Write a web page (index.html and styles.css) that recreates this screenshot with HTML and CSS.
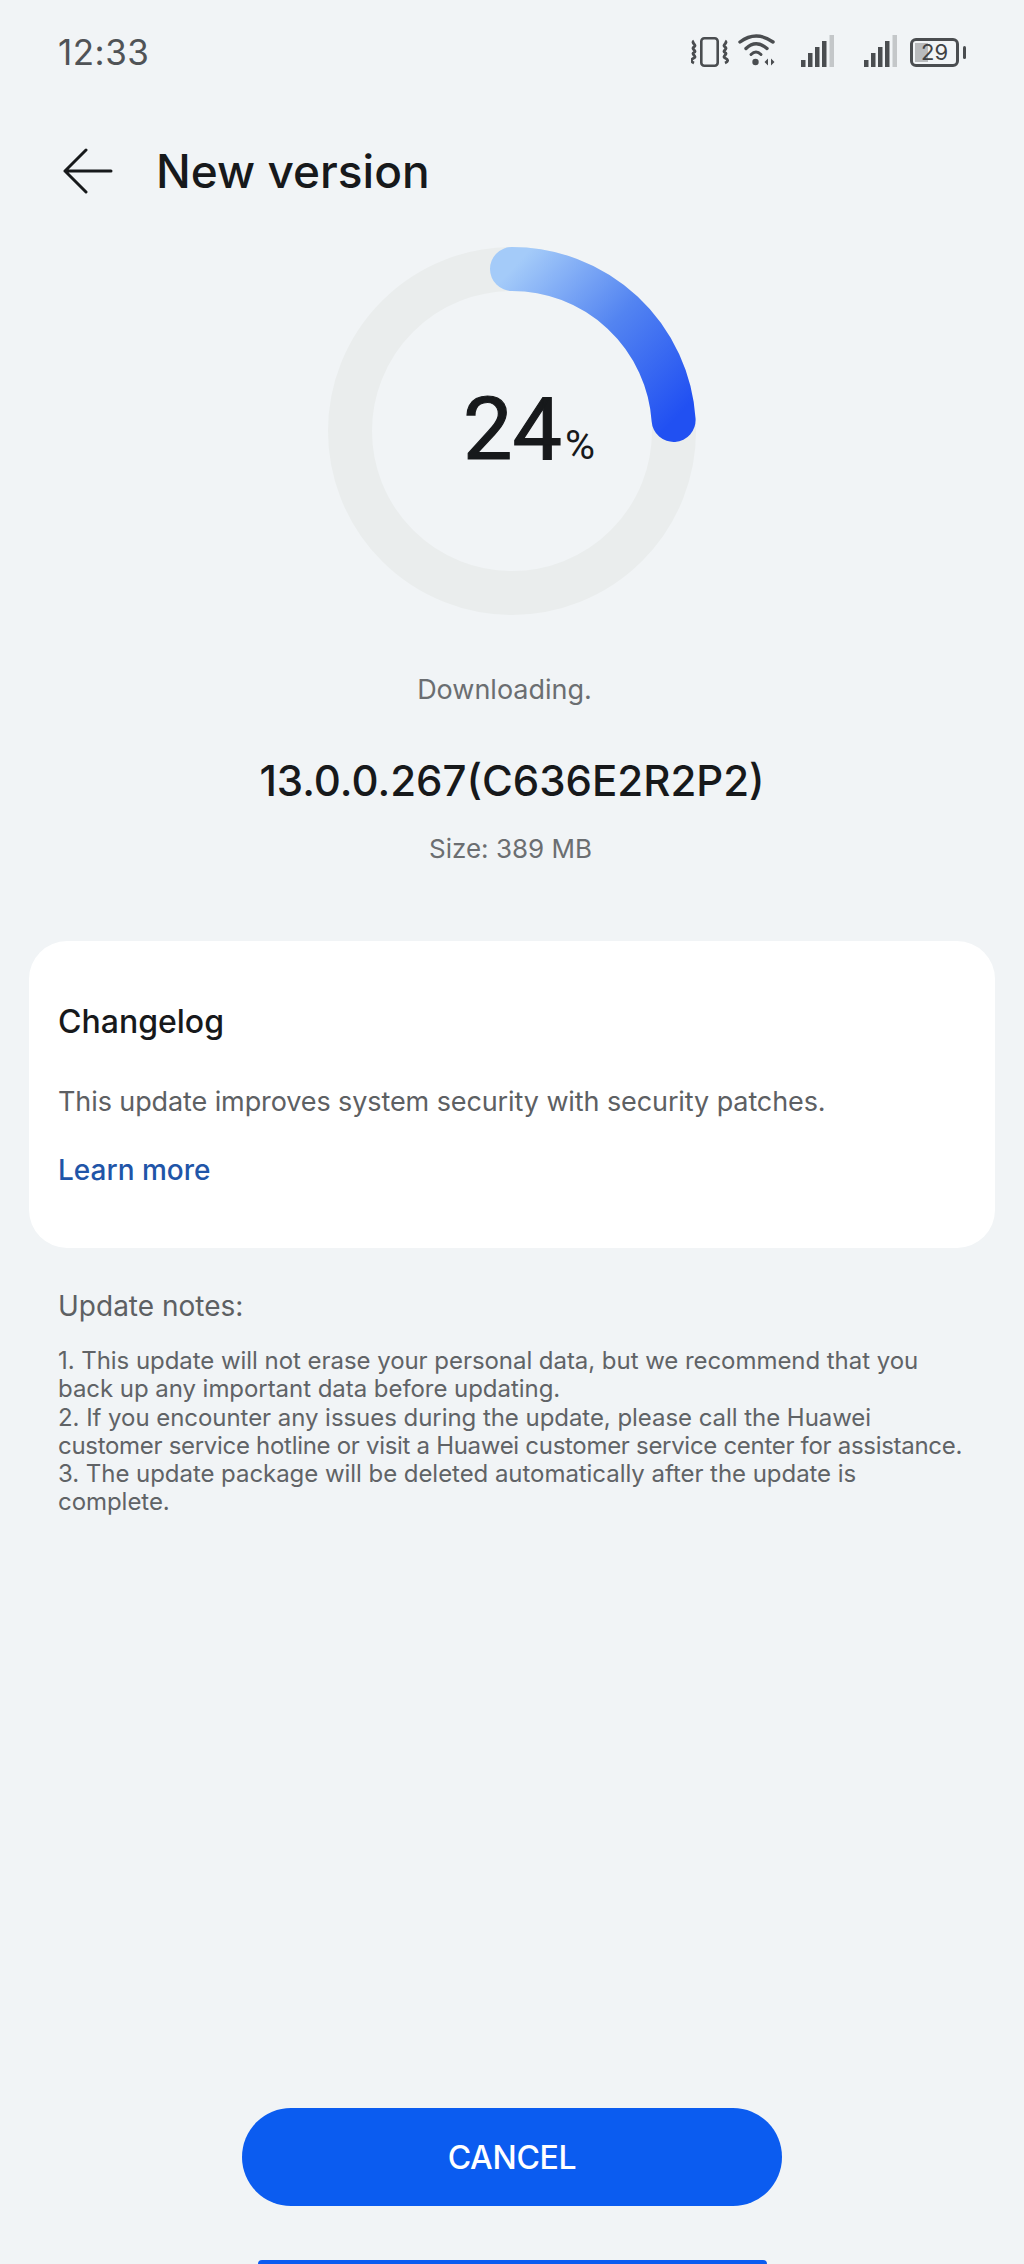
FILE: index.html
```html
<!DOCTYPE html>
<html lang="en">
<head>
<meta charset="utf-8">
<title>New version</title>
<link rel="stylesheet" href="styles.css">
</head>
<body>
<div class="screen">
  <header class="status">
    <span class="time">12:33</span>
    <div class="status-icons">
      <svg class="ic-vib" width="38" height="32" viewBox="0 0 38 32" fill="none" stroke="#4a4d50">
        <rect x="10.300" y="2.300" width="16.400" height="27.400" rx="3" stroke-width="2.600"/>
        <path d="M3 5c-3.500 2 3.500 4 0 6s3.500 4 0 5.500 3.500 4 0 5.500-3.500 3.500 0 5M34 5c3.500 2-3.500 4 0 6s-3.500 4 0 5.500-3.500 4 0 5.500 3.500 3.500 0 5" stroke-width="2.800"/>
      </svg>
      <svg class="ic-wifi" width="37" height="34" viewBox="0 0 37 34" fill="none" stroke="#4a4d50" stroke-linecap="round">
        <path d="M2 8Q18-4 35 8" stroke-width="3.400"/>
        <path d="M8 14.500Q18 5 29 14.500" stroke-width="3.400"/>
        <path d="M13 20.500Q18 15.500 23 20.500" stroke-width="3"/>
        <circle cx="17.500" cy="28" r="3.200" fill="#4a4d50" stroke="none"/>
        <path d="M30 24.500l-3.500 3.500 3.500 3.500zM33 24.500l3.500 3.500-3.500 3.500z" fill="#4a4d50" stroke="none"/>
      </svg>
      <svg class="ic-sig" width="33" height="34" viewBox="0 0 33 34">
        <rect x="0" y="25" width="4.500" height="7" fill="#4a4d50"/>
        <rect x="7" y="18" width="4.500" height="14" fill="#4a4d50"/>
        <rect x="14" y="12" width="4.500" height="20" fill="#4a4d50"/>
        <rect x="21" y="6" width="4.500" height="26" fill="#4a4d50"/>
        <rect x="28.500" y="0" width="4.500" height="32" fill="#c4c7c9"/>
      </svg>
      <svg class="ic-sig second" width="33" height="34" viewBox="0 0 33 34">
        <rect x="0" y="25" width="4.500" height="7" fill="#4a4d50"/>
        <rect x="7" y="18" width="4.500" height="14" fill="#4a4d50"/>
        <rect x="14" y="12" width="4.500" height="20" fill="#4a4d50"/>
        <rect x="21" y="6" width="4.500" height="26" fill="#4a4d50"/>
        <rect x="28.500" y="0" width="4.500" height="32" fill="#c4c7c9"/>
      </svg>
      <div class="battery">
        <div class="battery-body"><span class="battery-fill"></span><span class="battery-num">29</span></div>
        <span class="battery-tip"></span>
      </div>
    </div>
  </header>

  <div class="titlebar">
    <svg class="back" width="50" height="46" viewBox="0 0 50 46" fill="none" stroke="#17191b" stroke-width="3" stroke-linecap="round" stroke-linejoin="round">
      <path d="M48 23H2M23 2L2 23l21 21"/>
    </svg>
    <h1 class="title">New version</h1>
  </div>

  <div class="ring">
    <svg width="368" height="368" viewBox="0 0 368 368" fill="none">
      <defs>
        <linearGradient id="arc" x1="184" y1="22" x2="346" y2="173" gradientUnits="userSpaceOnUse">
          <stop offset="0" stop-color="#a4cbf9"/>
          <stop offset="0.5" stop-color="#5384f1"/>
          <stop offset="1" stop-color="#2150f2"/>
        </linearGradient>
      </defs>
      <circle cx="184" cy="184" r="162" stroke="#eaeded" stroke-width="44"/>
      <path d="M184 22A162 162 0 0 1 345.600 173" stroke="url(#arc)" stroke-width="44" stroke-linecap="round"/>
    </svg>
    <div class="percent"><span class="percent-num">24</span><span class="percent-sign">%</span></div>
  </div>

  <p class="state">Downloading.</p>
  <p class="build">13.0.0.267(C636E2R2P2)</p>
  <p class="size">Size: 389 MB</p>

  <section class="card">
    <h2 class="card-title">Changelog</h2>
    <p class="card-text">This update improves system security with security patches.</p>
    <a class="card-link">Learn more</a>
  </section>

  <section class="notes">
    <h3 class="notes-title">Update notes:</h3>
    <p class="notes-text">1. This update will not erase your personal data, but we recommend that you<br>back up any important data before updating.<br>2. If you encounter any issues during the update, please call the Huawei<br><span class="tight">customer service hotline or visit a Huawei customer service center for assistance.</span><br>3. The update package will be deleted automatically after the update is<br>complete.</p>
  </section>

  <div class="actions">
    <div class="btn-cancel">CANCEL</div>
    <div class="btn-next"></div>
  </div>
</div>
</body>
</html>
```
FILE: styles.css
```css
* { box-sizing: border-box; }
html, body { margin: 0; padding: 0; }
body { background: #f1f4f6; font-family: "Inter", "Noto Sans", sans-serif; }
.screen {
  width: 1024px;
  height: 2264px;
  overflow: hidden;
  display: flex;
  flex-direction: column;
  background: #f1f4f6;
}
.status {
  height: 52px;
  margin-top: 26px;
  padding: 0 58px;
  display: flex;
  align-items: center;
  justify-content: space-between;
}
.time { font-size: 35px; color: #505356; letter-spacing: 0.5px; }
.status-icons { display: flex; align-items: center; }
.ic-wifi { margin-left: 9px; margin-top: -2px; }
.ic-sig { margin-left: 26px; }
.ic-sig.second { margin-left: 30px; }
.battery { display: flex; align-items: center; margin-left: 13px; gap: 4px; }
.battery-body {
  position: relative;
  width: 49px;
  height: 29px;
  border: 3px solid #4a4d50;
  border-radius: 6px;
  display: flex;
  align-items: center;
  justify-content: center;
}
.battery-fill { position: absolute; left: 2px; top: 2px; bottom: 2px; width: 13px; background: #b9bbbd; }
.battery-num { position: relative; font-size: 22px; color: #3f4244; }
.battery-tip { width: 3px; height: 13px; background: #4a4d50; border-radius: 2px; }
.titlebar {
  height: 46px;
  margin-top: 70px;
  padding-left: 63px;
  display: flex;
  align-items: center;
  gap: 43px;
}
.back { flex: none; }
.title { margin: 0; font-size: 46px; font-weight: 500; color: #17191b; }
.ring {
  position: relative;
  width: 368px;
  height: 368px;
  margin: 53px 0 0 328px;
}
.ring svg { display: block; }
.percent {
  position: absolute;
  left: 135px;
  top: 132px;
  display: flex;
  align-items: baseline;
  color: #17191b;
  font-family: "Roboto", sans-serif;
}
.percent-num { font-size: 88px; font-weight: 400; line-height: 100px; -webkit-text-stroke: 1.2px #17191b; }
.percent-sign { font-size: 41px; font-weight: 400; margin-left: 3px; }
.state, .size { margin: 0; text-align: center; color: #6b6e71; }
.state { margin-top: 58px; padding-right: 15px; font-size: 27px; line-height: 34px; }
.build { margin: 49px 0 0; text-align: center; font-size: 42px; font-weight: 500; color: #17191b; line-height: 50px; }
.size { margin-top: 26px; padding-right: 3px; font-size: 26px; line-height: 34px; }
.card {
  margin: 75px 29px 0;
  height: 307px;
  padding: 61px 29px 0;
  background: #fff;
  border-radius: 38px;
}
.card-title { margin: 0; font-size: 32px; font-weight: 500; color: #17191b; line-height: 40px; }
.card-text { margin: 40px 0 0; font-size: 27px; letter-spacing: -0.1px; color: #5d6063; line-height: 40px; }
.card-link { display: block; margin-top: 28px; font-size: 28px; font-weight: 500; color: #1f55a8; line-height: 40px; }
.notes { padding: 40px 58px 0; }
.notes-title { margin: 0; font-size: 28px; font-weight: 400; color: #5d6063; line-height: 36px; }
.notes-text { margin: 23px 0 0; font-size: 24px; letter-spacing: -0.05px; color: #606366; line-height: 28.300px; white-space: nowrap; }
.tight { letter-spacing: -0.3px; }
.actions {
  margin-top: auto;
  display: flex;
  flex-direction: column;
  align-items: center;
}
.btn-cancel {
  width: 540px;
  height: 98px;
  border-radius: 49px;
  background: #0b5cf0;
  color: #fff;
  font-size: 32px;
  font-weight: 500;
  letter-spacing: -0.3px;
  display: flex;
  align-items: center;
  justify-content: center;
}
.btn-next {
  margin-top: 54px;
  flex: none;
  width: 509px;
  height: 4px;
  border-radius: 4px 4px 0 0;
  background: #0b5cf0;
}
```
